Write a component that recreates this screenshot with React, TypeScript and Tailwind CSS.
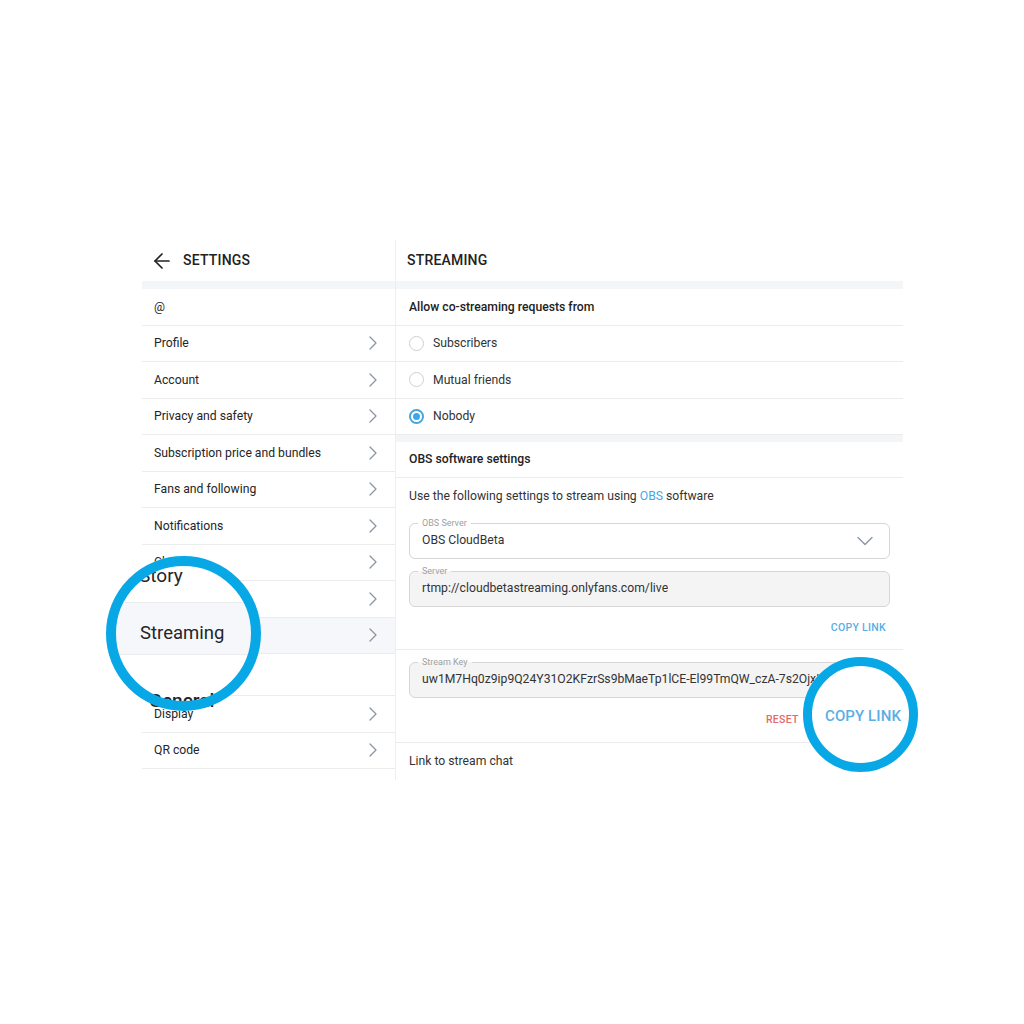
import React from "react";
import { ArrowLeft, ChevronRight, ChevronDown } from "lucide-react";

const font = { fontFamily: "Roboto, 'Noto Sans', Arial, sans-serif" };

function LeftRow({ label, chevron = true, active = false }: { label: string; chevron?: boolean; active?: boolean }) {
  return (
    <div
      className={`h-[36.5px] flex items-center justify-between pl-[12px] pr-[10px] border-b border-[#ececec] text-[12.2px] text-[#242529] ${
        active ? "bg-[#f5f7fb]" : ""
      }`}
    >
      <span>{label}</span>
      {chevron && <ChevronRight size={24} strokeWidth={1.3} color="#8a96a3" />}
    </div>
  );
}

function Radio({ label, checked = false }: { label: string; checked?: boolean }) {
  return (
    <div className="h-[36.5px] flex items-center pl-[13px] border-b border-[#ececec] text-[12.2px] text-[#333]">
      {checked ? (
        <span className="w-[15px] h-[15px] rounded-full border-2 border-[#41a5e6] flex items-center justify-center">
          <span className="w-[7px] h-[7px] rounded-full bg-[#41a5e6]" />
        </span>
      ) : (
        <span className="w-[15px] h-[15px] rounded-full border border-[#cfcfcf]" />
      )}
      <span className="ml-[9px]">{label}</span>
    </div>
  );
}

function Field({ label, value, filled = false, select = false }: { label: string; value: string; filled?: boolean; select?: boolean }) {
  return (
    <div
      className={`relative h-[36px] rounded-[6px] border border-[#d6d6d6] flex items-center justify-between pl-[12px] pr-[10px] ${
        filled ? "bg-[#f4f4f4]" : "bg-white"
      }`}
    >
      <span
        className={`absolute left-[8px] top-[-7px] px-[4px] text-[9px] leading-[12px] text-[#a0a0a0] ${
          filled ? "bg-[linear-gradient(to_bottom,#ffffff_50%,#f4f4f4_50%)]" : "bg-white"
        }`}
      >
        {label}
      </span>
      <span className="text-[12.2px] text-[#333] whitespace-nowrap overflow-hidden">{value}</span>
      {select && <ChevronDown size={28} strokeWidth={1.2} color="#8a96a3" />}
    </div>
  );
}

export default function App() {
  return (
    <div className="relative w-[1024px] h-[1024px] bg-white overflow-hidden" style={font}>
      <div className="pt-[240px] pl-[142px] flex">
        {/* Left column */}
        <div className="w-[254px] border-r border-[#eeeeee] flex flex-col">
          <div className="h-[41px] flex items-center pl-[8px] gap-[9px]">
            <ArrowLeft size={24} strokeWidth={1.7} color="#222" />
            <span className="text-[14px] font-medium text-[#222] tracking-[0.2px]">SETTINGS</span>
          </div>
          <div className="h-[8px] bg-[#f4f5f6]" />
          <LeftRow label="@" chevron={false} />
          <LeftRow label="Profile" />
          <LeftRow label="Account" />
          <LeftRow label="Privacy and safety" />
          <LeftRow label="Subscription price and bundles" />
          <LeftRow label="Fans and following" />
          <LeftRow label="Notifications" />
          <LeftRow label="Chats" />
          <LeftRow label="Story" />
          <LeftRow label="Streaming" active />
          <div className="h-[42px] border-b border-[#ececec] flex items-end pl-[12px] pb-[8px] text-[13px] font-medium text-[#242529]">
            General
          </div>
          <LeftRow label="Display" />
          <LeftRow label="QR code" />
          <div className="h-[8px]" />
        </div>

        {/* Right column */}
        <div className="w-[507px] flex flex-col">
          <div className="h-[41px] flex items-center pl-[11px]">
            <span className="text-[14px] font-medium text-[#222] tracking-[0.2px]">STREAMING</span>
          </div>
          <div className="h-[8px] bg-[#f4f5f6]" />
          <div className="h-[36.5px] flex items-center pl-[13px] border-b border-[#ececec] text-[12.2px] font-medium text-[#222]">
            Allow co-streaming requests from
          </div>
          <Radio label="Subscribers" />
          <Radio label="Mutual friends" />
          <Radio label="Nobody" checked />
          <div className="h-[7px] bg-[#f4f5f6]" />
          <div className="h-[36px] flex items-center pl-[13px] border-b border-[#ececec] text-[12.2px] font-medium text-[#222]">
            OBS software settings
          </div>
          <div className="h-[36.5px] flex items-center pl-[13px] text-[12.2px] text-[#333]">
            Use the following settings to stream using&nbsp;<span className="text-[#40a9e8]">OBS</span>&nbsp;software
          </div>
          <div className="px-[13px] pt-[8px] flex flex-col gap-[12px]">
            <Field label="OBS Server" value="OBS CloudBeta" select />
            <Field label="Server" value="rtmp://cloudbetastreaming.onlyfans.com/live" filled />
          </div>
          <div className="h-[43px] flex items-center justify-end pr-[17px] border-b border-[#ececec]">
            <span className="text-[10.5px] font-medium text-[#5aaee6] tracking-[0.3px]">COPY LINK</span>
          </div>
          <div className="px-[13px] pt-[12px]">
            <Field label="Stream Key" value="uw1M7Hq0z9ip9Q24Y31O2KFzrSs9bMaeTp1lCE-El99TmQW_czA-7s2OjxKq" filled />
          </div>
          <div className="h-[45px] flex items-center justify-end gap-[32px] pr-[17px] border-b border-[#ececec]">
            <span className="text-[10.5px] font-medium text-[#e46a6a] tracking-[0.3px]">RESET</span>
            <span className="text-[10.5px] font-medium text-[#5aaee6] tracking-[0.3px]">COPY LINK</span>
          </div>
          <div className="h-[37px] flex items-center pl-[13px] text-[12.2px] text-[#333]">Link to stream chat</div>
        </div>
      </div>

      {/* Left magnifier */}
      <div className="absolute left-[106px] top-[556px] w-[155px] h-[155px] rounded-full overflow-hidden bg-white">
        <div className="absolute left-[0px] top-[4px] w-[155px] h-[43px] border-b border-[#ececec]" />
        <span className="absolute left-[33px] top-[8px] text-[19px] leading-[24px] text-[#242529]">Story</span>
        <div className="absolute left-[0px] top-[47px] w-[155px] h-[52px] bg-[#f5f7fb] border-b border-[#ececec]" />
        <span className="absolute left-[34px] top-[65px] text-[18.5px] leading-[24px] text-[#242529]">Streaming</span>
      </div>
      <span className="absolute left-[149px] top-[689px] text-[19px] leading-[24px] font-medium text-[#242529]">General</span>
      <div className="absolute left-[106px] top-[556px] w-[155px] h-[155px] rounded-full border-[10px] border-[#08a8e6]" />

      {/* Right magnifier */}
      <div className="absolute left-[803px] top-[657px] w-[115px] h-[115px] rounded-full overflow-hidden bg-white">
        <span className="absolute left-[22px] top-[49px] text-[15px] leading-[20px] font-medium text-[#5aaee6] tracking-[0.1px]">
          COPY LINK
        </span>
      </div>
      <div className="absolute left-[803px] top-[657px] w-[115px] h-[115px] rounded-full border-[9px] border-[#08a8e6]" />
    </div>
  );
}
